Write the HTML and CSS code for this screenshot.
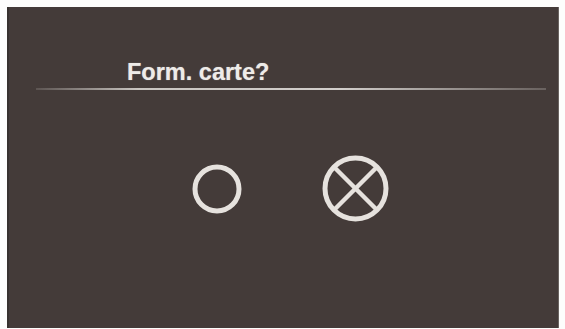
FILE: index.html
```html
<!DOCTYPE html>
<html lang="fr">

<head>
    <meta charset="UTF-8">
    <meta name="viewport" content="width=device-width, initial-scale=1.0">
    <title>Form. carte?</title>
    <link rel="stylesheet" href="styles.css">
</head>

<body>
    <div class="screen">
        <div class="title">Form. carte?</div>
        <div class="divider"></div>
        <div class="choices">
            <!-- yes -->
            <svg class="icon-ok" width="50" height="50" viewBox="0 0 50 50">
                <circle cx="25" cy="25" r="22" fill="none" stroke="#e6e2de" stroke-width="5" />
            </svg>
            <!-- no -->
            <svg class="icon-no" width="67" height="67" viewBox="0 0 67 67">
                <circle cx="33.5" cy="33.5" r="30.5" fill="none" stroke="#e6e2de" stroke-width="5" />
                <line x1="12" y1="12" x2="55" y2="55" stroke="#e6e2de" stroke-width="4.5" />
                <line x1="55" y1="12" x2="12" y2="55" stroke="#e6e2de" stroke-width="4.5" />
            </svg>
        </div>
    </div>
</body>

</html>
```

FILE: styles.css
```css
body {
    margin: 0;
    background-color: #fdfdfc;
    font-family: "Liberation Sans", Arial, sans-serif;
}

.screen {
    margin: 7px 6px 0 7px;
    height: 321px;
    background-color: #443b39;
    border-left: 2px solid #38322f;
    border-right: 1px solid #6a6461;
    box-sizing: border-box;
    display: flex;
    flex-direction: column;
}

.title {
    padding: 52px 0 0 118px;
    font-size: 23.5px;
    line-height: 26px;
    font-weight: bold;
    color: #eeebe8;
    text-shadow: 0 0 1px rgba(255, 255, 255, 0.5);
}

.divider {
    margin: 3px 12px 0 27px;
    height: 2px;
    background: linear-gradient(to right, rgba(190, 186, 182, 0.2), #c9c5c1 20%, #d2cecb 60%, rgba(190, 186, 182, 0.3));
}

.choices {
    display: flex;
    align-items: center;
    gap: 80px;
    margin-top: 65px;
    padding-left: 183px;
}
```
